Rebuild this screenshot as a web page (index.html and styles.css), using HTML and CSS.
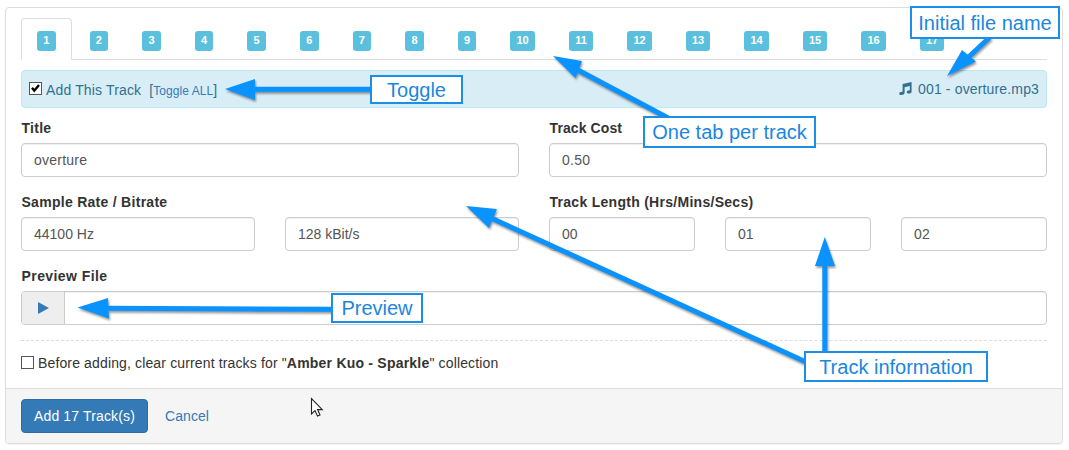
FILE: index.html
```
<!DOCTYPE html>
<html lang="en">
<head>
<meta charset="utf-8">
<title>Add Tracks</title>
<link rel="stylesheet" href="styles.css">
</head>
<body>
<main class="panel">
  <div class="panel-body">
    <nav class="tabs">
      <a class="tab active"><span class="badge">1</span></a>
      <a class="tab"><span class="badge">2</span></a>
      <a class="tab"><span class="badge">3</span></a>
      <a class="tab"><span class="badge">4</span></a>
      <a class="tab"><span class="badge">5</span></a>
      <a class="tab"><span class="badge">6</span></a>
      <a class="tab"><span class="badge">7</span></a>
      <a class="tab"><span class="badge">8</span></a>
      <a class="tab"><span class="badge">9</span></a>
      <a class="tab"><span class="badge wide">10</span></a>
      <a class="tab"><span class="badge wide">11</span></a>
      <a class="tab"><span class="badge wide">12</span></a>
      <a class="tab"><span class="badge wide">13</span></a>
      <a class="tab"><span class="badge wide">14</span></a>
      <a class="tab"><span class="badge wide">15</span></a>
      <a class="tab"><span class="badge wide">16</span></a>
      <a class="tab"><span class="badge wide">17</span></a>
    </nav>

    <div class="alert">
      <span class="check"><svg width="13" height="13" viewBox="0 0 13 13"><rect x=".5" y=".5" width="12" height="12" fill="#fff" stroke="#555"/><path d="M3 5.800 L5.300 8.700 L10 3" fill="none" stroke="#000" stroke-width="2.400"/></svg></span>
      <span class="add-text">Add This Track</span>
      <a class="toggle-all"><span class="bracket">[</span>Toggle ALL<span class="bracket">]</span></a>
      <span class="file">
        <svg class="note" width="13" height="13" viewBox="0 0 13 13"><path d="M3.600 2 L12.600 0 V9.400 C12.600 10.700 11.500 11.500 9.800 11.500 C8.600 11.500 7.800 11 7.800 10 C7.800 8.800 9.300 8 10.800 8.200 V4 L5.600 5.200 V10.800 C5.500 12.200 4 13 2.300 13 C1 13 .2 12.400 .2 11.400 C.2 10.300 1.900 9.400 3.600 9.700 Z" fill="#31708f"/></svg>
        <span class="file-name">001 - overture.mp3</span>
      </span>
    </div>

    <div class="row halves">
      <div class="group"><label class="label">Title</label><div class="input spaced">overture</div></div>
      <div class="group"><label class="label l-cost">Track Cost</label><div class="input spaced">0.50</div></div>
    </div>
    <div class="row halves">
      <div class="group">
        <label class="label">Sample Rate / Bitrate</label>
        <div class="row halves"><div class="input">44100 Hz</div><div class="input">128 kBit/s</div></div>
      </div>
      <div class="group">
        <label class="label">Track Length (Hrs/Mins/Secs)</label>
        <div class="row thirds"><div class="input">00</div><div class="input">01</div><div class="input spaced">02</div></div>
      </div>
    </div>
    <div class="group">
      <label class="label l-preview">Preview File</label>
      <div class="player">
        <div class="play"><svg width="11" height="12" viewBox="0 0 11 12"><path d="M0 0 L11 6 L0 12 Z" fill="#337ab7"/></svg></div>
      </div>
    </div>

    <div class="clear-row">
      <svg width="13" height="13" viewBox="0 0 13 13"><rect x=".5" y=".5" width="12" height="12" fill="#fff" stroke="#555"/></svg>
      <span class="clear-text">Before adding, clear current tracks for "<b>Amber Kuo - Sparkle</b>" collection</span>
    </div>
  </div>
  <footer class="panel-footer">
    <button class="btn">Add 17 Track(s)</button>
    <a class="cancel">Cancel</a>
  </footer>
</main>

<svg class="arrows" width="1069" height="450" viewBox="0 0 1069 450">
  <g fill="#0a93ff" stroke="#0a93ff">
    <path class="head" d="M225 89 L255 79 V100 Z"/><path class="shaft" d="M254 89.2 H371"/>
    <path class="head" d="M553 56 L582 61 L575.5 78 Z"/><path class="shaft" d="M577 69.5 L670 119"/>
    <path class="head" d="M947 76 L962 50 L976 61.5 Z"/><path class="shaft" d="M968 57.5 L990 37"/>
    <path class="head" d="M466 206 L497 209 L489 228 Z"/><path class="shaft" d="M491 218 L806 362"/>
    <path class="head" d="M824.8 237 L835 266 H815 Z"/><path class="shaft" d="M824.8 265 V353"/>
    <path class="head" d="M77.500 307.500 L108 298 L109 318.500 Z"/><path class="shaft" d="M107 308.200 L332 309.300"/>
  </g>
</svg>
<div class="callout c-file"><span>Initial file name</span></div>
<div class="callout c-toggle"><span>Toggle</span></div>
<div class="callout c-tab"><span>One tab per track</span></div>
<div class="callout c-preview"><span>Preview</span></div>
<div class="callout c-info"><span>Track information</span></div>
<svg class="cursor" width="14" height="21" viewBox="0 0 14 21"><path d="M1.500 1.500 V17 L5 13.600 L7.500 19 L10 17.900 L7.600 12.600 H12.300 Z" fill="#fff" stroke="#222" stroke-width="1.100"/></svg>
</body>
</html>
```
FILE: styles.css
```
* { box-sizing: border-box; }
body {
  margin: 0;
  padding: 7px 6px 6px 5px;
  height: 450px;
  overflow: hidden;
  background: #fff;
  color: #333;
  font: 14px/20px "Liberation Sans", Arial, sans-serif;
}
.panel {
  height: 437px;
  display: flex;
  flex-direction: column;
  border: 1px solid #ddd;
  border-radius: 4px;
  box-shadow: 0 1px 1px rgba(0, 0, 0, .05);
}
.panel-body { flex: 1; padding: 10px 15px 0; }
.tabs { display: flex; gap: 2px; height: 42px; border-bottom: 1px solid #ddd; }
.tab { height: 42px; padding: 12px 15px 0; border: 1px solid transparent; border-radius: 4px 4px 0 0; }
.tab.active { background: #fff; border-color: #ddd; border-bottom-color: #fff; }
.badge {
  display: block;
  width: 18.6px;
  height: 20px;
  border-radius: 3px;
  background: #5bc0de;
  color: #fff;
  font-size: 11px;
  font-weight: bold;
  line-height: 19px;
  text-align: center;
}
.badge.wide { width: 24.5px; }

.alert {
  display: flex;
  align-items: center;
  height: 38px;
  margin: 10px 0;
  padding: 0 7px;
  border: 1px solid #bce8f1;
  border-radius: 4px;
  background: #d9edf7;
  color: #31708f;
}
.check { display: flex; margin: -2px 4px 0 0; }
.add-text { margin: 2px 8px 0 0; letter-spacing: .15px; }
.toggle-all { margin-top: 2px; color: #337ab7; font-size: 12px; letter-spacing: .06px; }
.bracket { font-size: 14px; color: #31708f; }
.file { display: flex; align-items: center; gap: 6px; margin-left: auto; margin-top: -1px; }
.file-name { letter-spacing: .15px; }

.row { display: grid; column-gap: 30px; }
.halves { grid-template-columns: 1fr 1fr; }
.thirds { grid-template-columns: 1fr 1fr 1fr; }
.group { margin-bottom: 15px; }
.label { display: block; margin-bottom: 5px; padding-left: .5px; font-weight: bold; letter-spacing: .28px; white-space: nowrap; }
.l-cost { letter-spacing: .1px; }
.l-preview { letter-spacing: .42px; }
.input {
  height: 34px;
  padding: 6px 12px;
  border: 1px solid #ccc;
  border-radius: 4px;
  color: #555;
  box-shadow: inset 0 1px 1px rgba(0, 0, 0, .06);
}
.spaced { letter-spacing: .24px; }
.player { display: flex; height: 34px; border: 1px solid #ccc; border-radius: 4px; box-shadow: inset 0 1px 1px rgba(0, 0, 0, .06); }
.play { display: flex; align-items: center; justify-content: center; width: 43px; border-right: 1px solid #ccc; border-radius: 3px 0 0 3px; background: #eee; }
.clear-row { display: flex; align-items: center; gap: 4px; padding-top: 12px; border-top: 1px dashed #ddd; }
.clear-row svg { margin-top: -2px; }
.clear-text { letter-spacing: .14px; }
.clear-text b { letter-spacing: .22px; }
.panel-footer { display: flex; align-items: center; gap: 17px; height: 55px; padding: 0 15px; border-top: 1px solid #ddd; border-radius: 0 0 3px 3px; background: #f5f5f5; }
.btn { height: 34px; width: 127px; padding: 0; border: 1px solid #2e6da4; border-radius: 4px; background: #337ab7; color: #fff; font: inherit; letter-spacing: .15px; }
.cancel { color: #337ab7; letter-spacing: .08px; }

/* Annotations floating over the form */
.arrows { position: absolute; left: 0; top: 0; filter: drop-shadow(1px 2px 1px rgba(0, 0, 0, .4)); }
.head { stroke: none; }
.shaft { stroke-width: 5; fill: none; }
.callout {
  position: absolute;
  display: flex;
  align-items: center;
  justify-content: center;
  border: 2px solid #1b8fe8;
  background: #fff;
  color: #1b86e0;
  font-size: 20px;
  white-space: nowrap;
}
.c-file { left: 910px; top: 6px; width: 150px; height: 33px; }
.c-toggle { left: 370px; top: 75px; width: 93px; height: 29px; }
.c-tab { left: 643px; top: 116px; width: 173px; height: 32px; }
.c-preview { left: 331px; top: 293px; width: 92px; height: 30px; }
.c-info { left: 804px; top: 351px; width: 184px; height: 31px; }
.cursor { position: absolute; left: 310px; top: 397px; }
```
